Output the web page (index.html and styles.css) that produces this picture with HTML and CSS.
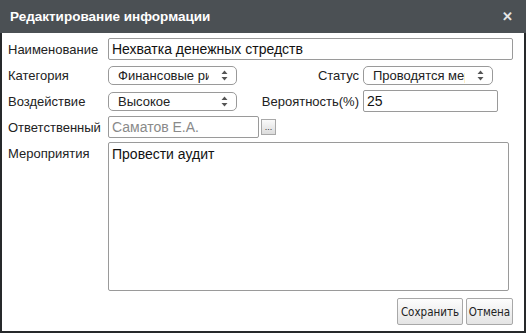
FILE: index.html
```html
<!DOCTYPE html>
<html lang="ru">
<head>
  <meta charset="UTF-8" />
  <title>Редактирование информации</title>
  <link rel="stylesheet" href="styles.css">
</head>
<body>
  <div class="dialog">
    <div class="titlebar">
      <span class="title">Редактирование информации</span>
      <span class="close">&#x2715;</span>
    </div>
    <div class="content">
      <div class="row">
        <label class="label">Наименование</label>
        <input class="field wide" type="text" value="Нехватка денежных стредств" />
      </div>

      <div class="row">
        <label class="label">Категория</label>
        <div class="select left-select">
          <span class="select-text">Финансовые риски</span>
          <svg class="arrows" width="7" height="11" viewBox="0 0 7 11"><path d="M3.5 0.5 L6.5 4 L0.5 4 Z M3.5 10.5 L6.5 7 L0.5 7 Z" fill="#555"/></svg>
        </div>
        <label class="label right">Статус</label>
        <div class="select right-select">
          <span class="select-text">Проводятся мероприятия</span>
          <svg class="arrows" width="7" height="11" viewBox="0 0 7 11"><path d="M3.5 0.5 L6.5 4 L0.5 4 Z M3.5 10.5 L6.5 7 L0.5 7 Z" fill="#555"/></svg>
        </div>
      </div>

      <div class="row">
        <label class="label">Воздействие</label>
        <div class="select left-select">
          <span class="select-text">Высокое</span>
          <svg class="arrows" width="7" height="11" viewBox="0 0 7 11"><path d="M3.5 0.5 L6.5 4 L0.5 4 Z M3.5 10.5 L6.5 7 L0.5 7 Z" fill="#555"/></svg>
        </div>
        <label class="label right">Вероятность(%)</label>
        <input class="field prob" type="text" value="25" />
      </div>

      <div class="row">
        <label class="label">Ответственный</label>
        <input class="field person" type="text" value="Саматов Е.А." readonly />
        <button class="pick">...</button>
      </div>

      <div class="row area-row">
        <label class="label">Мероприятия</label>
        <textarea class="field area">Провести аудит</textarea>
      </div>

      <div class="actions">
        <button class="btn save">Сохранить</button>
        <button class="btn cancel">Отмена</button>
      </div>
    </div>
  </div>
</body>
</html>
```

FILE: styles.css
```css
* {
  box-sizing: border-box;
}

body {
  margin: 0;
  font-family: "Liberation Sans", Arial, sans-serif;
  background: #fff;
  color: #222;
}

.dialog {
  width: 526px;
  height: 333px;
  border: 2px solid #26292b;
  border-top: none;
  display: flex;
  flex-direction: column;
  background: #fff;
}

.titlebar {
  height: 33px;
  margin: 0 -2px;
  background: #4b5054;
  display: flex;
  align-items: center;
  justify-content: space-between;
  padding: 0 13px 1px 10px;
}

.title {
  color: #fff;
  font-weight: bold;
  font-size: 13.5px;
}

.close {
  color: #e6e6e6;
  font-weight: bold;
  font-size: 13px;
}

.content {
  flex: 1;
  padding: 3px 11px 0 6px;
  display: flex;
  flex-direction: column;
}

.row {
  display: flex;
  align-items: center;
  height: 26px;
}

.label {
  width: 100px;
  flex: none;
  font-size: 13px;
  color: #222;
}

.label.right {
  width: 126px;
  text-align: right;
  padding-right: 4px;
}

.field {
  font-family: inherit;
  font-size: 14px;
  color: #111;
  border: 1px solid #9a9a9a;
  border-radius: 2px;
  height: 22px;
  padding: 0 3px;
  background: #fff;
  outline: none;
}

.wide {
  flex: 1;
}

.select {
  height: 19px;
  border: 1px solid #9a9a9a;
  border-radius: 5px;
  display: flex;
  align-items: center;
  padding: 0 8px 0 9px;
  background: #fff;
  font-size: 13px;
}

.left-select {
  width: 129px;
}

.right-select {
  width: 130px;
}

.select-text {
  flex: 1;
  overflow: hidden;
  white-space: nowrap;
}

.arrows {
  flex: none;
  margin-left: 12px;
}

.prob {
  width: 135px;
}

.person {
  width: 151px;
  color: #8a8a8a;
}

.pick {
  width: 15px;
  height: 16px;
  margin-left: 2px;
  padding: 0;
  border: 1px solid #a8a8a8;
  background: linear-gradient(#fafafa, #dcdcdc);
  font-size: 9px;
  line-height: 10px;
  color: #333;
}

.area-row {
  height: auto;
  align-items: flex-start;
  margin-top: 2px;
}

.area-row .label {
  padding-top: 4px;
}

.area {
  width: 401px;
  height: 149px;
  resize: none;
  padding: 3px 3px;
  font-size: 14px;
}

.actions {
  display: flex;
  justify-content: flex-end;
  gap: 3px;
  margin-top: 7px;
}

.btn {
  height: 27px;
  padding: 0;
  border: 1px solid #a8a8a8;
  border-radius: 2px;
  background: linear-gradient(#fdfdfd, #e4e4e4);
  font-family: "DejaVu Sans Condensed", "DejaVu Sans", sans-serif;
  font-size: 11.5px;
  color: #222;
}

.save {
  width: 66px;
}

.cancel {
  width: 47px;
}
```
